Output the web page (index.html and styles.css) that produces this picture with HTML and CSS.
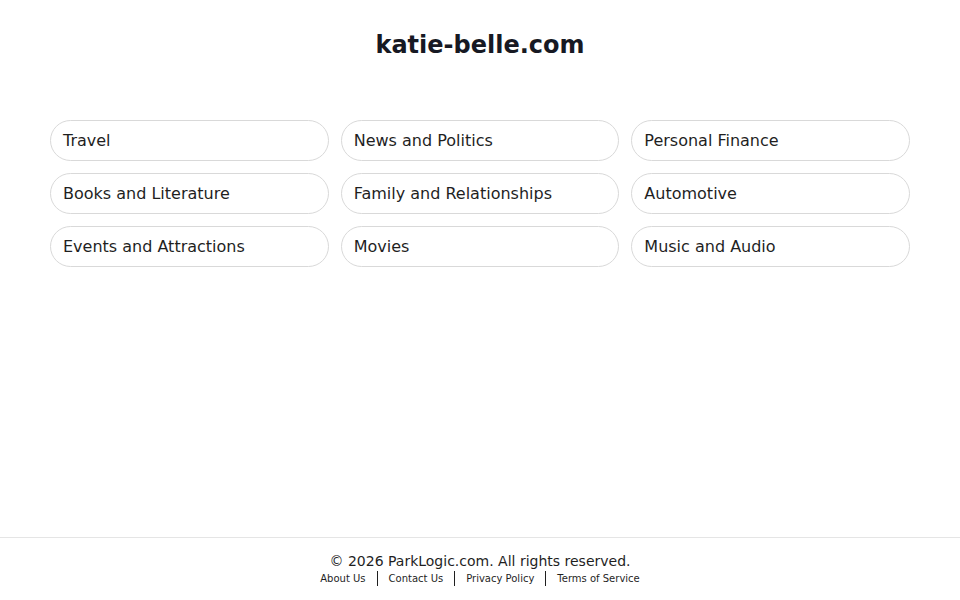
FILE: index.html
```html
<!DOCTYPE html>
<html>
<head>
<meta charset="utf-8">
<link rel="stylesheet" href="styles.css">
</head>
<body>
<div class="page">
  <main class="main">
    <h1 class="title">katie-belle.com</h1>
    <div class="grid">
      <a class="pill">Travel</a>
      <a class="pill">News and Politics</a>
      <a class="pill">Personal Finance</a>
      <a class="pill">Books and Literature</a>
      <a class="pill">Family and Relationships</a>
      <a class="pill">Automotive</a>
      <a class="pill">Events and Attractions</a>
      <a class="pill">Movies</a>
      <a class="pill">Music and Audio</a>
    </div>
  </main>
  <footer class="footer">
    <div class="copy">© 2026 ParkLogic.com. All rights reserved.</div>
    <div class="links">
      <a class="link">About Us</a>
      <span class="sep"></span>
      <a class="link">Contact Us</a>
      <span class="sep"></span>
      <a class="link">Privacy Policy</a>
      <span class="sep"></span>
      <a class="link">Terms of Service</a>
    </div>
  </footer>
</div>
</body>
</html>
```
FILE: styles.css
```css
html, body {
  margin: 0;
  padding: 0;
  background: #fff;
}
body {
  font-family: "DejaVu Sans", sans-serif;
  color: #1a1a1a;
}
.page {
  min-height: 100vh;
  display: flex;
  flex-direction: column;
}
.main {
  flex: 1;
  display: flex;
  flex-direction: column;
  align-items: center;
}
.title {
  margin: 31px 0 0;
  font-size: 24px;
  line-height: 29px;
  font-weight: bold;
  color: #171923;
}
.grid {
  margin-top: 60px;
  width: 860px;
  display: grid;
  grid-template-columns: repeat(3, 1fr);
  gap: 12px;
}
.pill {
  display: flex;
  align-items: center;
  height: 41px;
  box-sizing: border-box;
  border: 1px solid #d9d9d9;
  border-radius: 21px;
  padding: 0 12px;
  font-size: 16px;
  color: #1f1f1f;
  background: #fff;
}
.footer {
  border-top: 1px solid #e5e5e5;
  padding: 14px 0 14px;
  text-align: center;
}
.copy {
  font-size: 14px;
  line-height: 18px;
  color: #1f1f1f;
}
.links {
  display: flex;
  justify-content: center;
  align-items: center;
  gap: 11px;
  margin-top: 0;
  height: 16px;
}
.link {
  font-size: 10px;
  color: #1f1f1f;
}
.sep {
  width: 1px;
  height: 15px;
  background: #1f1f1f;
}
```
